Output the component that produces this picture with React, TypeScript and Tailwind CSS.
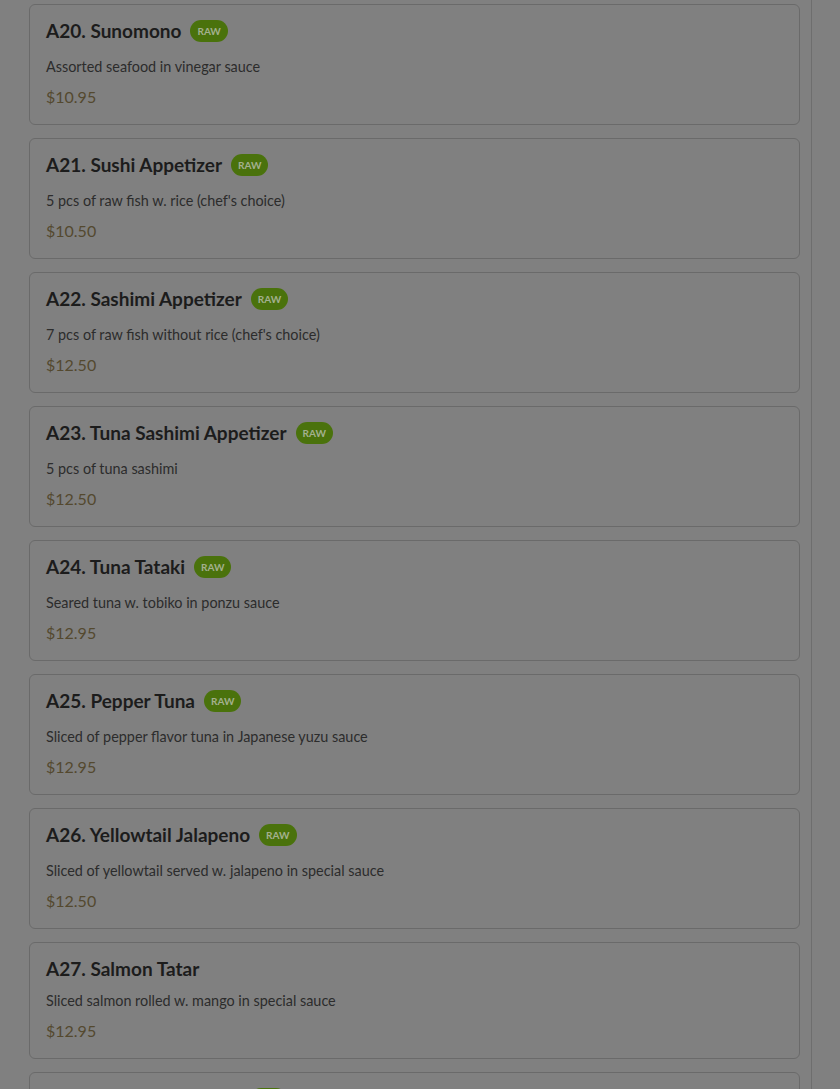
type Item = { code: string; name: string; desc: string; price: string; raw: boolean }

const items: Item[] = [
  { code: "A20", name: "Sunomono", desc: "Assorted seafood in vinegar sauce", price: "$10.95", raw: true },
  { code: "A21", name: "Sushi Appetizer", desc: "5 pcs of raw fish w. rice (chef's choice)", price: "$10.50", raw: true },
  { code: "A22", name: "Sashimi Appetizer", desc: "7 pcs of raw fish without rice (chef's choice)", price: "$12.50", raw: true },
  { code: "A23", name: "Tuna Sashimi Appetizer", desc: "5 pcs of tuna sashimi", price: "$12.50", raw: true },
  { code: "A24", name: "Tuna Tataki", desc: "Seared tuna w. tobiko in ponzu sauce", price: "$12.95", raw: true },
  { code: "A25", name: "Pepper Tuna", desc: "Sliced of pepper flavor tuna in Japanese yuzu sauce", price: "$12.95", raw: true },
  { code: "A26", name: "Yellowtail Jalapeno", desc: "Sliced of yellowtail served w. jalapeno in special sauce", price: "$12.50", raw: true },
  { code: "A27", name: "Salmon Tatar", desc: "Sliced salmon rolled w. mango in special sauce", price: "$12.95", raw: false },
  { code: "A28", name: "Salmon Carpaccio", desc: "Thin sliced salmon w. yuzu dressing", price: "$12.95", raw: true },
]

function MenuCard({ item }: { item: Item }) {
  return (
    <div
      className={`rounded-md border border-[#6a6a6a] px-4 ${
        item.raw ? "pt-3 pb-[15px]" : "pt-[14px] pb-[15px]"
      }`}
    >
      <div className={`flex items-center gap-[9px] ${item.raw ? "h-7" : "h-6"}`}>
        <h3 className="text-[19px] font-bold leading-6 text-[#1c1c1c]">
          {item.code}. {item.name}
        </h3>
        {item.raw && (
          <span className="flex h-[22px] items-center rounded-full bg-[#4a720c] px-[7px] text-[10px] font-bold text-[#a3b08e]">
            RAW
          </span>
        )}
      </div>
      <p className={`${item.raw ? "mt-[13px]" : "mt-[11px]"} text-[14.4px] leading-[18px] text-[#2c2c2c]`}>
        {item.desc}
      </p>
      <p className="mt-[9px] text-[16px] leading-6 text-[#54492f]">{item.price}</p>
    </div>
  )
}

export default function App() {
  return (
    <div
      className="h-[1089px] overflow-hidden bg-[#808080]"
      style={{ fontFamily: "Lato, 'Noto Sans', sans-serif" }}
    >
      <div className="h-full w-[812px] border-r border-[#6e6e6e] pl-[29px] pr-[11px] pt-1">
        <div className="flex flex-col gap-[13px]">
          {items.map((item) => (
            <MenuCard key={item.code} item={item} />
          ))}
        </div>
      </div>
    </div>
  )
}
